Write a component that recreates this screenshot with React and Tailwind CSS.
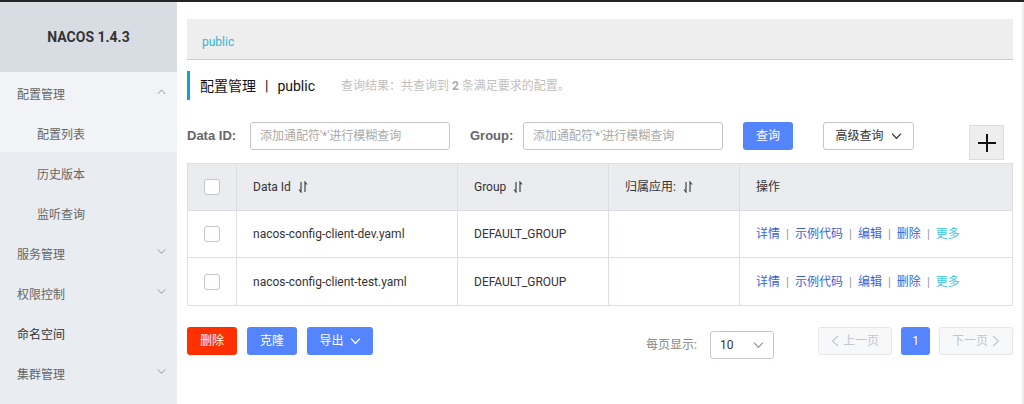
import React from "react";

const font = { fontFamily: 'Roboto, "Noto Sans CJK SC", sans-serif' };

function Chevron({ up = false, className = "", size = 10 }) {
  return (
    <svg width={size} height={size * 0.6} viewBox="0 0 10 6" className={className}>
      <path
        d={up ? "M1 5.5 L5 1 L9 5.5" : "M1 0.5 L5 5 L9 0.5"}
        fill="none"
        stroke="currentColor"
        strokeWidth="1.1"
      />
    </svg>
  );
}

function SortIcon() {
  return (
    <svg width="10" height="12" viewBox="0 0 10 12" className="ml-[7px] text-[#444]">
      <path d="M3 1 V11 L1 8.5" fill="none" stroke="currentColor" strokeWidth="1.2" />
      <path d="M7 11 V1 L9 3.5" fill="none" stroke="currentColor" strokeWidth="1.2" />
    </svg>
  );
}

function Checkbox() {
  return <div className="w-4 h-4 rounded-[3px] border border-[#c4c6cf] bg-white" />;
}

const menu = [
  { label: "历史版本", sub: true },
  { label: "监听查询", sub: true },
  { label: "服务管理", arrow: true },
  { label: "权限控制", arrow: true },
  { label: "命名空间", dark: true },
  { label: "集群管理", arrow: true },
];

const rows = ["nacos-config-client-dev.yaml", "nacos-config-client-test.yaml"];

function Actions() {
  const sep = <span className="mx-[6px] text-[#999]">|</span>;
  return (
    <div className="flex items-center text-[12px] text-[#3c5fd8]">
      <span>详情</span>
      {sep}
      <span>示例代码</span>
      {sep}
      <span>编辑</span>
      {sep}
      <span>删除</span>
      {sep}
      <span className="text-[#3cc6e4]">更多</span>
    </div>
  );
}

export default function App() {
  return (
    <div className="w-[1024px] h-[404px] flex flex-col overflow-hidden bg-white" style={font}>
      <div className="h-[2px] bg-[#232427]" />
      <div className="flex flex-1 min-h-0">
        {/* sidebar */}
        <div className="w-[177px] flex flex-col bg-[#e9ecf1]">
          <div className="h-[70px] flex items-center justify-center bg-[#d8dce3] text-[14px] font-bold text-[#333]">
            NACOS 1.4.3
          </div>
          <div className="bg-[#f1f3f7]">
            <div className="h-10 flex items-center justify-between pt-[5px] pl-[17px] pr-[11px] text-[12px] text-[#666]">
              <span>配置管理</span>
              <Chevron up size={9} className="text-[#999] -mt-[6px]" />
            </div>
            <div className="h-10 flex items-center pt-[5px] pl-[37px] text-[12px] text-[#666]">配置列表</div>
          </div>
          {menu.map((m) => (
            <div
              key={m.label}
              className={
                "h-10 flex items-center justify-between pt-[5px] pr-[11px] text-[12px] " +
                (m.sub ? "pl-[37px] " : "pl-[17px] ") +
                (m.dark ? "text-[#333]" : "text-[#666]")
              }
            >
              <span>{m.label}</span>
              {m.arrow && <Chevron size={9} className="text-[#999] -mt-[6px]" />}
            </div>
          ))}
        </div>

        {/* main */}
        <div className="flex-1 pl-[10px] pr-[9px] pt-[17px]">
          <div className="h-[41px] bg-[#eeeeee] border-b border-[#cccccc] flex items-center pt-[6px] pl-[15px] text-[12px] text-[#2db7d8]">
            public
          </div>

          <div className="mt-[11px] h-[29px] border-l-[3px] border-[#1a9ecb] flex items-center pt-[1px] pl-[10px]">
            <span className="text-[14px] text-[#111]">配置管理</span>
            <span className="text-[14px] text-[#111] mx-[9px]">|</span>
            <span className="text-[14px] text-[#111]">public</span>
            <span className="ml-[26px] text-[12px] text-[#c0c0c0]">
              查询结果：共查询到 <b className="font-bold text-[#aaa]">2</b> 条满足要求的配置。
            </span>
          </div>

          {/* search row */}
          <div className="mt-[22px] flex items-start">
            <span className="w-[63px] h-7 flex items-center text-[13px] font-bold text-[#666]" style={{ fontFamily: '"Liberation Sans", sans-serif' }}>
              Data ID:
            </span>
            <div className="w-[200px] h-7 border border-[#c4c6cf] rounded-[3px] flex items-center px-[9px] text-[12px] text-[#aaa]">
              添加通配符'*'进行模糊查询
            </div>
            <span className="ml-[20px] w-[53px] h-7 flex items-center text-[13px] font-bold text-[#666]" style={{ fontFamily: '"Liberation Sans", sans-serif' }}>
              Group:
            </span>
            <div className="w-[200px] h-7 border border-[#c4c6cf] rounded-[3px] flex items-center px-[9px] text-[12px] text-[#aaa]">
              添加通配符'*'进行模糊查询
            </div>
            <div className="ml-[20px] w-[50px] h-7 rounded-[3px] bg-[#5584ff] text-white text-[12px] flex items-center justify-center">
              查询
            </div>
            <div className="ml-[30px] w-[91px] h-7 rounded-[3px] border border-[#c4c6cf] text-[12px] text-[#333] flex items-center justify-center gap-[7px]">
              高级查询
              <Chevron size={11} className="text-[#333]" />
            </div>
            <div className="ml-auto mr-[9px] mt-[3px] w-[35px] h-[35px] bg-[#eeeeee] border border-[#dddddd] flex items-center justify-center">
              <svg width="20" height="20" viewBox="0 0 20 20">
                <path d="M10 1 V19 M1 10 H19" stroke="#111" strokeWidth="2" />
              </svg>
            </div>
          </div>

          {/* table */}
          <div className="mt-[3px] border border-[#dcdee3] text-[12px] text-[#333]">
            <div className="h-[47px] flex bg-[#ebecf0] border-b border-[#dcdee3]">
              <div className="w-[49px] flex items-center justify-center border-r border-[#dcdee3]">
                <Checkbox />
              </div>
              <div className="w-[221px] flex items-center pl-4 border-r border-[#dcdee3]">
                Data Id <SortIcon />
              </div>
              <div className="w-[151px] flex items-center pl-4 border-r border-[#dcdee3]">
                Group <SortIcon />
              </div>
              <div className="w-[131px] flex items-center pl-4 border-r border-[#dcdee3]">
                归属应用: <SortIcon />
              </div>
              <div className="flex-1 flex items-center pl-4">操作</div>
            </div>
            {rows.map((r, i) => (
              <div
                key={r}
                className={"h-[47px] flex " + (i === 0 ? "border-b border-[#dcdee3]" : "")}
              >
                <div className="w-[49px] flex items-center justify-center border-r border-[#dcdee3]">
                  <Checkbox />
                </div>
                <div className="w-[221px] flex items-center pl-4 border-r border-[#dcdee3]">{r}</div>
                <div className="w-[151px] flex items-center pl-4 border-r border-[#dcdee3]">DEFAULT_GROUP</div>
                <div className="w-[131px] border-r border-[#dcdee3]" />
                <div className="flex-1 flex items-center pl-4">
                  <Actions />
                </div>
              </div>
            ))}
          </div>

          {/* footer */}
          <div className="mt-[21px] flex items-start text-[12px]">
            <div className="w-[50px] h-7 rounded-[3px] bg-[#ff3000] text-white flex items-center justify-center">删除</div>
            <div className="ml-[10px] w-[50px] h-7 rounded-[3px] bg-[#5584ff] text-white flex items-center justify-center">克隆</div>
            <div className="ml-[10px] w-[66px] h-7 rounded-[3px] bg-[#5584ff] text-white flex items-center justify-center gap-[6px]">
              导出
              <Chevron size={11} className="text-white" />
            </div>
            <div className="ml-auto flex items-center mt-[4px]">
              <span className="text-[#888]">每页显示:</span>
              <div className="ml-[13px] w-[64px] h-7 border border-[#c4c6cf] rounded-[3px] flex items-center justify-between px-[9px] text-[#333]">
                10
                <Chevron size={11} className="text-[#999]" />
              </div>
            </div>
            <div className="ml-[44px] w-[74px] h-7 rounded-[3px] bg-[#f7f8fa] border border-[#e6e7eb] text-[#c4c6cf] flex items-center justify-center gap-[4px]">
              <svg width="8" height="12" viewBox="0 0 8 12">
                <path d="M7 1 L1.5 6 L7 11" fill="none" stroke="currentColor" strokeWidth="1.2" />
              </svg>
              上一页
            </div>
            <div className="ml-[9px] w-[29px] h-7 rounded-[3px] bg-[#5584ff] text-white flex items-center justify-center">1</div>
            <div className="ml-[9px] w-[74px] h-7 rounded-[3px] bg-[#f7f8fa] border border-[#e6e7eb] text-[#c4c6cf] flex items-center justify-center gap-[4px]">
              下一页
              <svg width="8" height="12" viewBox="0 0 8 12">
                <path d="M1 1 L6.5 6 L1 11" fill="none" stroke="currentColor" strokeWidth="1.2" />
              </svg>
            </div>
          </div>
        </div>
        <div className="w-[2px] bg-[#eeeeee]" />
      </div>
    </div>
  );
}
